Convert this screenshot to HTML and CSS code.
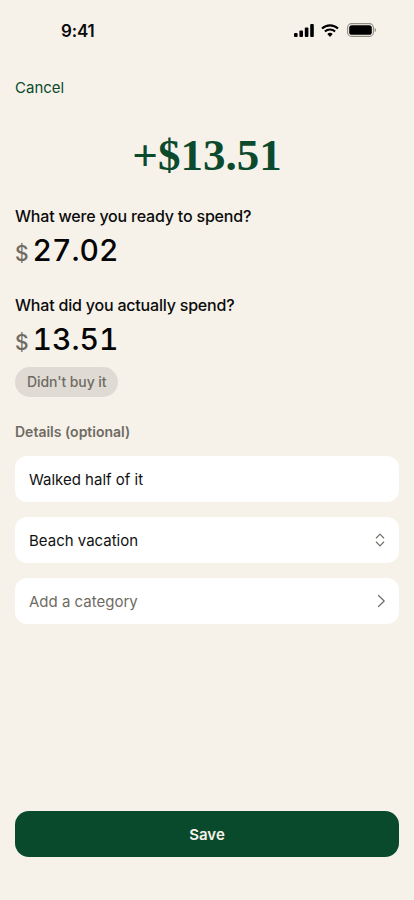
FILE: index.html
```html
<!DOCTYPE html>
<html lang="en">
<head>
<meta charset="utf-8">
<title>Add save</title>
<link rel="stylesheet" href="styles.css">
</head>
<body>
<main class="screen">
  <header class="status">
    <span class="time">9:41</span>
    <div class="status-icons">
      <svg class="signal" width="20" height="13" viewBox="0 0 20 13"><rect x="0" y="9" width="3.6" height="4" rx="1"/><rect x="5.4" y="6.5" width="3.6" height="6.500" rx="1"/><rect x="10.800" y="3.500" width="3.6" height="9.500" rx="1"/><rect x="16.200" y="0" width="3.6" height="13" rx="1"/></svg>
      <svg class="wifi" width="18" height="13" viewBox="0 0 18 13"><path d="M1 4.600a11.500 11.500 0 0 1 16 0" fill="none" stroke="#000" stroke-width="2.100"/><path d="M3.900 7.600a7.400 7.400 0 0 1 10.200 0" fill="none" stroke="#000" stroke-width="2.100"/><path d="M6.300 10a3.900 3.900 0 0 1 5.400 0L9 13z"/></svg>
      <svg class="battery" width="29" height="14" viewBox="0 0 29 14"><rect x="0.600" y="0.600" width="25.800" height="12.800" rx="4" fill="none" stroke="#8f8b84" stroke-width="1.100"/><rect x="2.200" y="2.200" width="22.600" height="9.600" rx="2.600"/><path d="M27.600 5v4c.8-.3 1.400-1.100 1.400-2s-.6-1.700-1.400-2z" fill="#8f8b84"/></svg>
    </div>
  </header>

  <a class="cancel">Cancel</a>
  <h1 class="total">+$13.51</h1>

  <section class="field first">
    <h2 class="question">What were you ready to spend?</h2>
    <div class="amount"><span class="currency">$</span><span class="value">27.02</span></div>
  </section>

  <section class="field second">
    <h2 class="question">What did you actually spend?</h2>
    <div class="amount"><span class="currency">$</span><span class="value">13.51</span></div>
    <span class="pill">Didn't buy it</span>
  </section>

  <h3 class="details">Details (optional)</h3>
  <div class="rows">
    <div class="row">Walked half of it</div>
    <div class="row">
      <span>Beach vacation</span>
      <svg class="updown" width="12" height="16" viewBox="0 0 12 16"><path d="M2.300 6 6 2.200 9.700 6M2.300 10 6 13.800 9.700 10" fill="none" stroke="#6f6b63" stroke-width="1.100" stroke-linecap="round" stroke-linejoin="round"/></svg>
    </div>
    <div class="row placeholder">
      <span>Add a category</span>
      <svg class="chevron" width="9" height="14" viewBox="0 0 9 14"><path d="M1.500 1.500 7.200 7l-5.700 5.500" fill="none" stroke="#6f6b63" stroke-width="1.200" stroke-linecap="round" stroke-linejoin="round"/></svg>
    </div>
  </div>

  <button class="save" type="button">Save</button>
</main>
</body>
</html>
```
FILE: styles.css
```css
* { box-sizing: border-box; }
html, body { margin: 0; padding: 0; }
body { background: #f6f2ea; font-family: Inter, "Liberation Sans", sans-serif; color: #000; }
.screen { width: 414px; height: 900px; padding: 0 15px; display: flex; flex-direction: column; overflow: hidden; }
.status { height: 60px; margin: 0 -15px 1px; padding: 0 38px 0 61px; display: flex; justify-content: space-between; align-items: center; }
.time { margin-top: 2px; font-size: 17px; font-weight: 600; line-height: 20px; letter-spacing: -0.2px; color: #0b0b0b; }
.status-icons { display: flex; align-items: center; gap: 7px; }
.status-icons svg { display: block; }
.battery { margin-left: 1px; }
.cancel { margin-top: 17px; font-size: 15px; line-height: 19px; color: #0b4a2d; align-self: flex-start; }
.total { margin: 32px 0 0; text-align: center; font-family: "Liberation Serif", serif; font-weight: 700; font-size: 45px; line-height: 52px; color: #0b4a2d; }
.field { display: flex; flex-direction: column; align-items: flex-start; }
.first { margin-top: 25px; }
.second { margin-top: 26px; }
.question { margin: 0; font-size: 16px; font-weight: 500; line-height: 20px; letter-spacing: -0.2px; color: #0b0b0b; }
.amount { margin-top: 5px; height: 38px; display: flex; align-items: baseline; gap: 4px; line-height: 38px; }
.currency { font-size: 21px; font-weight: 500; color: #6f6b63; }
.value { font-size: 30px; font-weight: 500; font-variant-numeric: tabular-nums; color: #050505; }
.pill { margin-top: 9px; height: 30px; padding: 0 12px; border-radius: 15px; background: #dfdbd4; color: #6f6b63; font-size: 14px; font-weight: 500; line-height: 30px; letter-spacing: -0.1px; }
.details { margin: 26px 0 0; font-size: 14px; font-weight: 600; line-height: 17px; color: #6f6b63; }
.rows { margin-top: 16px; display: flex; flex-direction: column; gap: 15px; }
.row { height: 46px; padding: 0 13px 0 14px; border-radius: 12px; background: #fff; display: flex; justify-content: space-between; align-items: center; font-size: 15px; color: #111; }
.placeholder { color: #6f6b63; }
.save { margin-top: auto; margin-bottom: 43px; height: 46px; border: 0; border-radius: 14px; background: #0a4a2c; color: #f6f2ea; font-family: inherit; font-size: 15px; font-weight: 600; }
```
